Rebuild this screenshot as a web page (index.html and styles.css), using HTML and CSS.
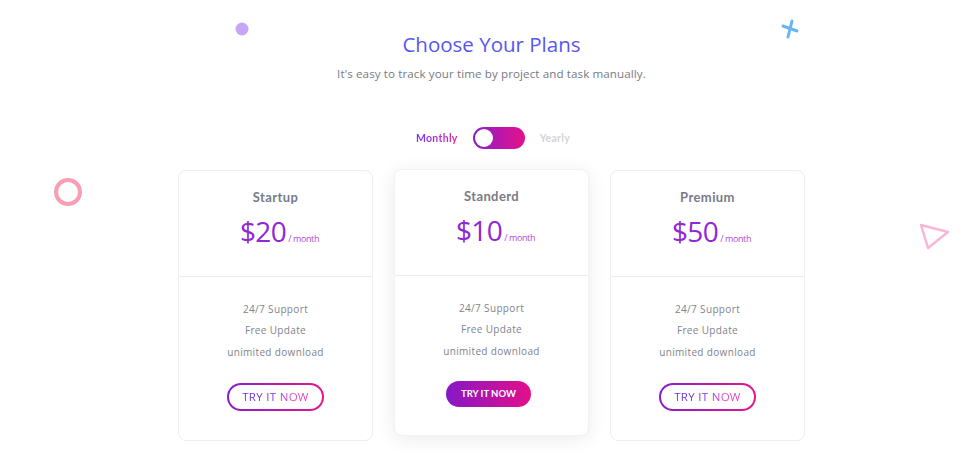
FILE: index.html
```html
<!DOCTYPE html>
<html>
<head>
<meta charset="utf-8">
<link rel="stylesheet" href="styles.css">
</head>
<body>
<section class="pricing">
  <svg class="deco deco-dot" width="14" height="14" viewBox="0 0 14 14"><circle cx="7" cy="7" r="6.5" fill="#c8a6f6"/></svg>
  <svg class="deco deco-cross" width="20" height="20" viewBox="0 0 20 20"><g stroke="#67b6f3" stroke-width="3" stroke-linecap="round"><line x1="3" y1="7" x2="17" y2="12"/><line x1="12" y1="2" x2="8" y2="18"/></g></svg>
  <svg class="deco deco-ring" width="30" height="30" viewBox="0 0 30 30"><circle cx="15" cy="15" r="12" fill="none" stroke="#fb9db3" stroke-width="4"/></svg>
  <svg class="deco deco-tri" width="34" height="30" viewBox="0 0 34 30"><polygon points="3,3 30,10 10,26" fill="none" stroke="#fbb5d7" stroke-width="2.5" stroke-linejoin="round"/></svg>

  <h1 class="title">Choose Your Plans</h1>
  <p class="subtitle">It's easy to track your time by project and task manually.</p>

  <div class="switch-row">
    <span class="switch-label active">Monthly</span>
    <span class="switch"><span class="knob"></span></span>
    <span class="switch-label">Yearly</span>
  </div>

  <div class="cards">
    <div class="card">
      <div class="card-head">
        <div class="plan">Startup</div>
        <div class="price"><span class="amount">$20</span><span class="per">/ month</span></div>
      </div>
      <div class="card-body">
        <ul class="features">
          <li>24/7 Support</li>
          <li>Free Update</li>
          <li>unimited download</li>
        </ul>
        <a class="btn btn-outline"><span>TRY IT NOW</span></a>
      </div>
    </div>
    <div class="card card-featured">
      <div class="card-head">
        <div class="plan">Standerd</div>
        <div class="price"><span class="amount">$10</span><span class="per">/ month</span></div>
      </div>
      <div class="card-body">
        <ul class="features">
          <li>24/7 Support</li>
          <li>Free Update</li>
          <li>unimited download</li>
        </ul>
        <a class="btn btn-filled">TRY IT NOW</a>
      </div>
    </div>
    <div class="card">
      <div class="card-head">
        <div class="plan">Premium</div>
        <div class="price"><span class="amount">$50</span><span class="per">/ month</span></div>
      </div>
      <div class="card-body">
        <ul class="features">
          <li>24/7 Support</li>
          <li>Free Update</li>
          <li>unimited download</li>
        </ul>
        <a class="btn btn-outline"><span>TRY IT NOW</span></a>
      </div>
    </div>
  </div>
</section>
</body>
</html>
```
FILE: styles.css
```css
html, body {
  margin: 0;
  padding: 0;
  background: #ffffff;
}
body {
  font-family: "Open Sans", "Noto Sans", sans-serif;
  width: 980px;
  height: 471px;
  overflow: hidden;
}
.pricing {
  position: relative;
  padding-top: 29px;
  display: flex;
  flex-direction: column;
  align-items: center;
  height: 442px;
}
.deco { position: absolute; }
.deco-dot { left: 235px; top: 22px; }
.deco-cross { left: 780px; top: 19px; }
.deco-ring { left: 53px; top: 177px; }
.deco-tri { left: 918px; top: 222px; }

.title {
  margin: 0;
  font-size: 20.5px;
  line-height: 30px;
  font-weight: 400;
  color: #5856f2;
  letter-spacing: 0;
  margin-left: 3px;
}
.subtitle {
  margin: 6px 0 0;
  font-size: 11.6px;
  line-height: 18px;
  color: #777a82;
  letter-spacing: 0.1px;
  margin-left: 3px;
}
.switch-row {
  margin-top: 44px;
  display: flex;
  align-items: center;
  gap: 15px;
  height: 22px;
  margin-left: 6px;
}
.switch-label {
  font-family: "Lato", "Open Sans", sans-serif;
  font-weight: 700;
  font-size: 10.5px;
  color: #d3d3d6;
  letter-spacing: 0.3px;
}
.switch-label.active {
  background: linear-gradient(90deg, #6d3af0, #c22bd0 70%, #e0207f);
  -webkit-background-clip: text;
  background-clip: text;
  color: transparent;
}
.switch {
  width: 52px;
  height: 22px;
  border-radius: 11px;
  background: linear-gradient(90deg, #8a1ecb, #e4118a);
  display: flex;
  align-items: center;
  padding-left: 2px;
  box-sizing: border-box;
}
.knob {
  width: 18px;
  height: 18px;
  border-radius: 50%;
  background: #fff;
}
.cards {
  margin-top: 21px;
  display: flex;
  gap: 21px;
  align-items: flex-start;
  margin-left: 3px;
}
.card {
  width: 195px;
  box-sizing: border-box;
  border: 1px solid #eeeef0;
  border-radius: 8px;
  background: #fff;
}
.card-featured {
  margin-top: -1px;
  border-color: #f2f2f4;
  box-shadow: 0 3px 18px rgba(40, 40, 70, 0.09);
}
.card-head {
  padding: 17px 0 28px;
  border-bottom: 1px solid #ececef;
  text-align: center;
}
.plan {
  font-family: "Lato", "Open Sans", sans-serif;
  font-weight: 700;
  font-size: 13px;
  line-height: 18px;
  color: #777b88;
  letter-spacing: 0.4px;
}
.price {
  margin-top: 8px;
  line-height: 34px;
  height: 34px;
  display: flex;
  justify-content: center;
  align-items: baseline;
  padding-left: 8px;
}
.amount {
  font-size: 28px;
  color: #8f28d6;
  font-weight: 400;
  letter-spacing: -0.6px;
}
.per {
  font-size: 9px;
  color: #b44ad6;
  margin-left: 2px;
  letter-spacing: -0.4px;
}
.card-body {
  padding: 22px 0 29px;
  display: flex;
  flex-direction: column;
  align-items: center;
}
.card-featured .card-body {
  padding-top: 22px;
  padding-bottom: 28px;
}
.features {
  list-style: none;
  margin: 0;
  padding: 0;
  text-align: center;
}
.features li {
  font-size: 10px;
  line-height: 21.3px;
  color: #80838d;
  letter-spacing: 0.35px;
}
.btn {
  margin-top: 20px;
  display: flex;
  align-items: center;
  justify-content: center;
  box-sizing: border-box;
  border-radius: 16px;
  font-size: 11px;
  cursor: pointer;
}
.btn-outline {
  width: 97px;
  height: 28px;
  border: 2px solid transparent;
  background: linear-gradient(#fff, #fff) padding-box, linear-gradient(90deg, #8b1ed0, #e4168a) border-box;
  border-radius: 15px;
}
.btn-outline span {
  background: linear-gradient(90deg, #5c38e6, #7a35e0 45%, #e04bc9 75%, #ea3aa8);
  -webkit-background-clip: text;
  background-clip: text;
  color: transparent;
  letter-spacing: 0.3px;
  font-size: 11.5px;
}
.card-featured .btn {
  margin-top: 19px;
  margin-right: 6px;
}
.btn-filled {
  width: 85px;
  height: 26px;
  border-radius: 13px;
  background: linear-gradient(90deg, #8518c6, #e30f8a);
  color: #fff;
  font-family: "Lato", "Open Sans", sans-serif;
  font-weight: 700;
  font-size: 9.5px;
  letter-spacing: 0;
}
```
